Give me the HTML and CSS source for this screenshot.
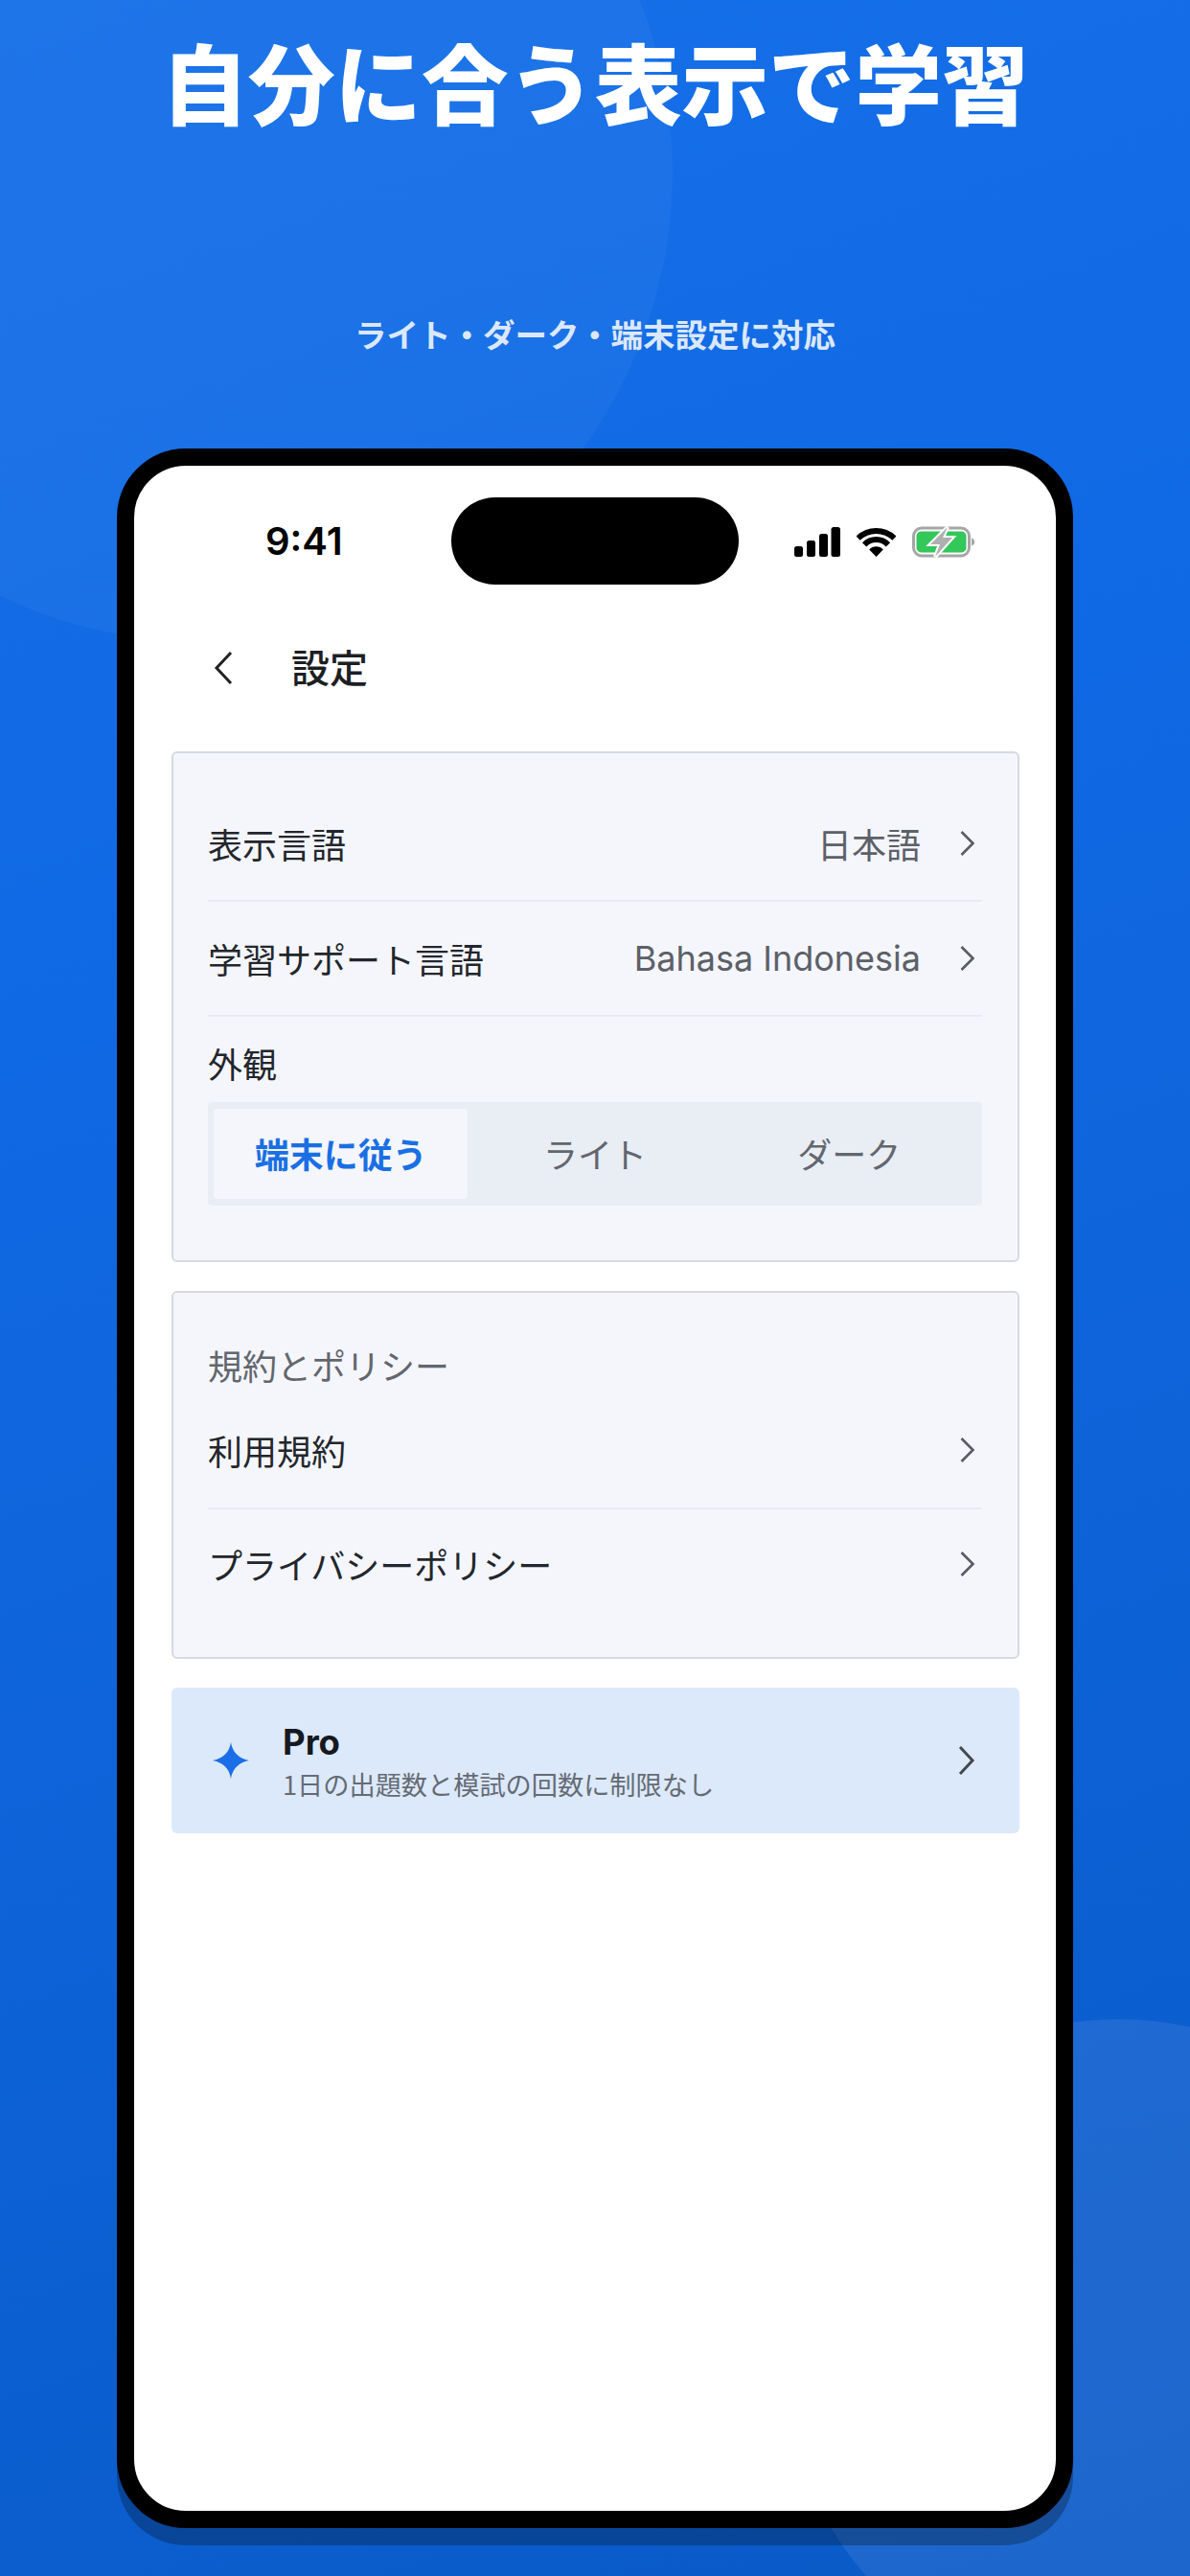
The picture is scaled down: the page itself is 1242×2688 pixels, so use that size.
FILE: index.html
```html
<!DOCTYPE html>
<html lang="ja">
<head>
<meta charset="UTF-8" />
<meta name="viewport" content="width=device-width, initial-scale=1" />
<title>自分に合う表示で学習</title>
<link rel="stylesheet" href="styles.css">
</head>
<body>

<div class="poster">
  <div class="circle circle-top"></div>
  <div class="circle circle-bottom"></div>

  <h1 class="headline">自分に合う表示で学習</h1>
  <p class="subline">ライト・ダーク・端末設定に対応</p>

  <div class="phone">
    <div class="status-bar">
      <span class="time">9:41</span>
      <div class="island"></div>
      <div class="status-icons">
        <svg class="signal" width="48" height="31" viewBox="0 0 48 31">
          <rect x="0" y="20" width="9" height="11" rx="2.5" />
          <rect x="13" y="14" width="9" height="17" rx="2.5" />
          <rect x="26" y="7" width="9" height="24" rx="2.5" />
          <rect x="38.5" y="0" width="9.5" height="31" rx="2.5" />
        </svg>
        <svg class="wifi" width="41" height="31" viewBox="0 0 41 31">
          <path d="M1.6 11.6A27 27 0 0 1 39.4 11.6" fill="none" stroke="#000" stroke-width="6" />
          <path d="M8.1 18.4A17 17 0 0 1 32.9 18.4" fill="none" stroke="#000" stroke-width="6" />
          <path d="M20.5 31L13.2 23.4A10 10 0 0 1 27.8 23.4Z" fill="#000" />
        </svg>
        <svg class="battery" width="66" height="33" viewBox="0 0 66 33">
          <rect x="1.5" y="2" width="58" height="29" rx="8.5" fill="none" stroke="#a6a6a6" stroke-width="3" />
          <rect x="4.500" y="5.500" width="52" height="22" rx="5" fill="#34c759" />
          <path d="M62 12.5c2 .6 3.2 2.2 3.2 4s-1.2 3.4-3.2 4z" fill="#a6a6a6" />
          <path d="M37 1L19 19h10l-5 13 18-20H32z" fill="#b0b0b0" stroke="#fff" stroke-width="4" paint-order="stroke" />
        </svg>
      </div>
    </div>

    <div class="nav">
      <svg class="back" width="22" height="36" viewBox="0 0 22 36">
        <path d="M19 2L4 18l15 16" fill="none" stroke="#222" stroke-width="3" />
      </svg>
      <span class="nav-title">設定</span>
    </div>

    <div class="content">
      <div class="card card-settings">
        <div class="row">
          <span class="row-label">表示言語</span>
          <span class="row-value">日本語</span>
          <svg class="chevron" width="16" height="26" viewBox="0 0 16 26"><path d="M1.500 1l12 12-12 12" /></svg>
        </div>
        <div class="row">
          <span class="row-label">学習サポート言語</span>
          <span class="row-value latin">Bahasa Indonesia</span>
          <svg class="chevron" width="16" height="26" viewBox="0 0 16 26"><path d="M1.500 1l12 12-12 12" /></svg>
        </div>
        <div class="field-label">外観</div>
        <div class="segments">
          <div class="segment active">端末に従う</div>
          <div class="segment">ライト</div>
          <div class="segment">ダーク</div>
        </div>
      </div>

      <div class="card card-policy">
        <div class="section-title">規約とポリシー</div>
        <div class="row row-terms">
          <span class="row-label">利用規約</span>
          <svg class="chevron" width="16" height="26" viewBox="0 0 16 26"><path d="M1.500 1l12 12-12 12" /></svg>
        </div>
        <div class="row row-privacy">
          <span class="row-label">プライバシーポリシー</span>
          <svg class="chevron" width="16" height="26" viewBox="0 0 16 26"><path d="M1.500 1l12 12-12 12" /></svg>
        </div>
      </div>

      <div class="pro-card">
        <svg class="star" width="38" height="38" viewBox="0 0 38 38">
          <path d="M19 0C20.500 10 27 17 38 19C27 21 20.500 28 19 38C17.500 28 11 21 0 19C11 17 17.500 10 19 0Z" />
        </svg>
        <div class="pro-text">
          <div class="pro-title">Pro</div>
          <div class="pro-sub">1日の出題数と模試の回数に制限なし</div>
        </div>
        <svg class="chevron chevron-pro" width="18" height="30" viewBox="0 0 18 30"><path d="M2 1l13 14L2 29" /></svg>
      </div>
    </div>
  </div>
</div>

</body>
</html>
```

FILE: styles.css
```css
* {
  box-sizing: border-box;
}
body {
  margin: 0;
  font-family: "Noto Sans CJK JP", "Noto Sans", sans-serif;
}
.poster {
  position: relative;
  width: 1242px;
  height: 2688px;
  overflow: hidden;
  padding-top: 19px;
  background: linear-gradient(160deg, #1670e8 0%, #1069e4 35%, #0a5ac7 100%);
}
.circle {
  position: absolute;
  border-radius: 50%;
}
.circle-top {
  left: -278px;
  top: -310px;
  width: 980px;
  height: 980px;
  background: rgba(255, 255, 255, 0.035);
}
.circle-bottom {
  left: 817px;
  top: 2107px;
  width: 700px;
  height: 700px;
  background: rgba(255, 255, 255, 0.08);
}
.headline {
  position: relative;
  margin: 0;
  height: 130px;
  color: white;
  font-size: 90.500px;
  line-height: 130px;
  font-weight: 900;
  text-align: center;
}
.subline {
  position: relative;
  margin: 0;
  padding-top: 174px;
  height: 319px;
  color: rgba(255, 255, 255, 0.85);
  font-size: 33.500px;
  line-height: 50px;
  font-weight: 700;
  text-align: center;
}

/* phone */
.phone {
  position: relative;
  width: 998px;
  height: 2170px;
  margin: 0 auto;
  background: white;
  border: 18px solid black;
  border-radius: 72px;
  box-shadow: 0 18px 0 rgba(0, 0, 0, 0.25);
}
.status-bar {
  display: flex;
  align-items: center;
  height: 91px;
  margin-top: 33px;
  padding-left: 137px;
}
.time {
  width: 194px;
  font-family: Inter, sans-serif;
  font-size: 40px;
  font-weight: 600;
  color: black;
}
.island {
  width: 300px;
  height: 91px;
  background: black;
  border-radius: 46px;
}
.status-icons {
  display: flex;
  align-items: center;
  gap: 17px;
  margin-left: 58px;
  padding-top: 2px;
}
.signal {
  fill: black;
}
.nav {
  display: flex;
  align-items: center;
  height: 174px;
  padding: 0 0 0 82px;
}
.back {
  margin-right: 60px;
}
.nav-title {
  margin-top: -5px;
  font-size: 40px;
  font-weight: 500;
  color: #1d1f24;
}

/* settings */
.content {
  display: flex;
  flex-direction: column;
  gap: 30px;
  padding: 0 38px 0 39px;
}
.card {
  background: #f4f6fb;
  border: 2px solid #d5dae1;
  border-radius: 6px;
  padding: 0 37px 0 36px;
}
.card-settings {
  height: 533px;
  padding-top: 35px;
}
.card-policy {
  height: 384px;
  padding-top: 50px;
}
.row {
  display: flex;
  align-items: center;
  height: 120px;
  padding-right: 7px;
  font-size: 36px;
  border-bottom: 2px solid #e8ebf1;
}
.row-terms {
  margin-top: 6px;
  padding-bottom: 3px;
}
.row-privacy {
  padding-bottom: 6px;
  border-bottom: none;
}
.row-label {
  color: #23262c;
  flex: 1;
}
.row-value {
  color: #5c6068;
  margin-right: 41px;
}
.latin {
  font-family: Inter, sans-serif;
  font-size: 36px;
}
.chevron {
  flex: none;
}
.chevron path {
  fill: none;
  stroke: #585c63;
  stroke-width: 2.6;
}
.field-label {
  margin-top: 23px;
  margin-bottom: 16px;
  font-size: 36px;
  line-height: 50px;
  color: #23262c;
}
.section-title {
  font-size: 36px;
  line-height: 50px;
  color: #62666e;
}
.segments {
  display: grid;
  grid-template-columns: repeat(3, 1fr);
  height: 108px;
  padding: 7px 6px;
  background: #e9edf4;
  border-radius: 4px;
}
.segment {
  display: flex;
  align-items: center;
  justify-content: center;
  border-radius: 4px;
  font-size: 36px;
  color: #62666e;
  padding-bottom: 2px;
}
.segment.active {
  background: #f4f6fb;
  color: #1a6fe3;
  font-weight: 700;
}

/* upgrade banner */
.pro-card {
  display: flex;
  align-items: center;
  height: 152px;
  padding: 0 46px 0 43px;
  background: #dce9fb;
  border-radius: 6px;
}
.star {
  fill: #1a6fe8;
  margin-right: 35px;
}
.pro-text {
  flex: 1;
}
.pro-title {
  margin-top: 3px;
  font-family: Inter, sans-serif;
  font-size: 36.500px;
  line-height: 44px;
  font-weight: 700;
  color: #16191f;
}
.pro-sub {
  margin-top: 1px;
  font-size: 27.200px;
  line-height: 40px;
  color: #656b74;
}
.chevron-pro path {
  stroke: #44484f;
  stroke-width: 3;
}
```
